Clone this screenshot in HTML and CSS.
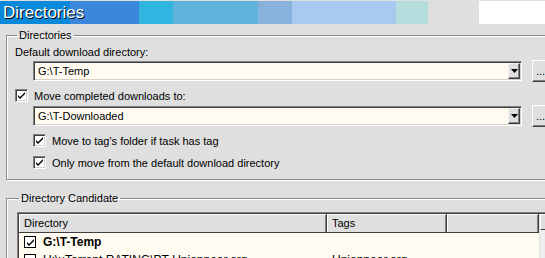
FILE: index.html
```html
<!DOCTYPE html>
<html lang="en">
<head>
    <meta charset="UTF-8">
    <title>Directories</title>
    <link rel="stylesheet" href="styles.css">
</head>
<body>
    <div class="caption">
        <div class="caption-band">Directories</div>
        <div class="caption-gap"></div>
        <div class="caption-white"></div>
    </div>

    <fieldset class="group">
        <legend>Directories</legend>
        <div class="label-row">Default download directory:</div>
        <div class="combo-row">
            <div class="combo">
                <span class="combo-text">G:\T-Temp</span>
                <span class="combo-btn"><svg width="7" height="4" viewBox="0 0 7 4"><path d="M0 0h7L3.5 4z" fill="#000"/></svg></span>
            </div>
            <button class="browse">...</button>
        </div>
        <label class="check-row first">
            <span class="check"><svg width="9" height="9" viewBox="0 0 9 9"><path d="M1 4l2 2 5-5v2l-5 5-2-2z" fill="#000"/></svg></span>
            Move completed downloads to:
        </label>
        <div class="combo-row second">
            <div class="combo">
                <span class="combo-text">G:\T-Downloaded</span>
                <span class="combo-btn"><svg width="7" height="4" viewBox="0 0 7 4"><path d="M0 0h7L3.5 4z" fill="#000"/></svg></span>
            </div>
            <button class="browse">...</button>
        </div>
        <label class="check-row sub">
            <span class="check"><svg width="9" height="9" viewBox="0 0 9 9"><path d="M1 4l2 2 5-5v2l-5 5-2-2z" fill="#000"/></svg></span>
            Move to tag's folder if task has tag
        </label>
        <label class="check-row sub last">
            <span class="check"><svg width="9" height="9" viewBox="0 0 9 9"><path d="M1 4l2 2 5-5v2l-5 5-2-2z" fill="#000"/></svg></span>
            Only move from the default download directory
        </label>
    </fieldset>

    <fieldset class="group candidates">
        <legend>Directory Candidate</legend>
        <div class="listview">
            <div class="list-body">
                <div class="list-head">
                    <div class="col col-dir">Directory</div>
                    <div class="col col-tags">Tags</div>
                    <div class="col col-rest"></div>
                </div>
                <div class="list-row">
                    <div class="col-dir cell">
                        <span class="check small"><svg width="9" height="9" viewBox="0 0 9 9"><path d="M1 4l2 2 5-5v2l-5 5-2-2z" fill="#000"/></svg></span>
                        <b>G:\T-Temp</b>
                    </div>
                    <div class="col-tags cell"></div>
                </div>
                <div class="list-row">
                    <div class="col-dir cell">
                        <span class="check small"></span>
                        H:\uTorrent RATING\PT-Unionpeer.org
                    </div>
                    <div class="col-tags cell">Unionpeer.org</div>
                </div>
            </div>
            <div class="list-scroll">
                <span class="scroll-up"><svg width="7" height="4" viewBox="0 0 7 4"><path d="M0 4h7L3.5 0z" fill="#000"/></svg></span>
            </div>
        </div>
    </fieldset>
</body>
</html>
```

FILE: styles.css
```css
body {
    margin: 0;
    width: 545px;
    height: 258px;
    overflow: hidden;
    background-color: #dfdfdf;
    font-family: "Liberation Sans", Arial, sans-serif;
    font-size: 11px;
    color: #000;
}
.caption {
    display: flex;
    height: 23px;
    margin-top: 1px;
}
.caption-band {
    width: 425px;
    padding-left: 3px;
    line-height: 23px;
    font-size: 17px;
    color: #fff;
    text-shadow: 1px 1px 0 #000;
    background: linear-gradient(to right,
        #0a88da 0 70px, #3a88dc 70px 139px, #30b4e0 139px 173px,
        #60b4dc 173px 258px, #88b2dc 258px 292px, #a8caf0 292px 396px,
        #b4dede 396px);
}
.caption-gap {
    width: 51px;
}
.caption-white {
    flex: 1;
    background-color: #fff;
}
.group {
    margin: 5px 0 0 6px;
    width: 560px;
    padding: 0 0 10px 8px;
    border: 1px solid #8a8a8a;
    box-shadow: inset 1px 1px 0 #fff, 1px 1px 0 #fff;
}
.group legend {
    padding: 0 2px;
    margin-left: 2px;
    line-height: 13px;
}
.label-row {
    margin-top: 3px;
    line-height: 14px;
}
.combo-row {
    display: flex;
    align-items: center;
    margin-top: 1px;
    padding-left: 18px;
}
.combo-row.second {
    margin-top: 3px;
}
.combo {
    display: flex;
    align-items: center;
    width: 485px;
    height: 16px;
    background-color: #fffbf0;
    border: 1px solid;
    border-color: #808080 #fff #fff #808080;
    box-shadow: inset 1px 1px 0 #404040, inset -1px -1px 0 #d4d0c8;
    padding: 1px;
}
.combo-text {
    flex: 1;
    padding-left: 3px;
}
.combo-btn {
    display: flex;
    align-items: center;
    justify-content: center;
    width: 12px;
    height: 16px;
    box-sizing: border-box;
    background-color: #dfdfdf;
    border: 1px solid;
    border-color: #f0f0f0 #404040 #404040 #f0f0f0;
    box-shadow: inset -1px -1px 0 #808080;
}
.browse {
    margin-left: 10px;
    width: 24px;
    height: 22px;
    padding: 0 0 0 3px;
    text-align: left;
    font: inherit;
    background-color: #dfdfdf;
    border: 1px solid;
    border-color: #fff #404040 #404040 #fff;
    box-shadow: inset -1px -1px 0 #808080;
}
.check-row {
    display: flex;
    align-items: center;
    gap: 6px;
    height: 13px;
}
.check-row.first {
    margin-top: 7px;
}
.check-row.sub {
    margin-top: 7px;
    padding-left: 18px;
}
.check-row.last {
    margin-top: 9px;
}
.check {
    display: flex;
    align-items: center;
    justify-content: center;
    width: 13px;
    height: 13px;
    box-sizing: border-box;
    background-color: #fff;
    border: 1px solid;
    border-color: #808080 #fff #fff #808080;
    box-shadow: inset 1px 1px 0 #404040, inset -1px -1px 0 #d4d0c8;
}
.check.small {
    border: 1px solid #000;
    box-shadow: none;
    width: 12px;
    height: 12px;
}
.candidates {
    margin-top: 12px;
    padding: 7px 0 0 10px;
}
.listview {
    display: flex;
    width: 540px;
    height: 60px;
    background-color: #fffbf0;
    border: 1px solid;
    border-color: #808080 #fff #fff #808080;
    box-shadow: inset 1px 1px 0 #404040;
    padding: 1px 0 0 1px;
}
.list-body {
    width: 520px;
}
.list-head {
    display: flex;
    height: 18px;
    background-color: #dfdfdf;
    border-bottom: 1px solid #404040;
}
.col {
    box-sizing: border-box;
    line-height: 18px;
    padding-left: 5px;
    border-right: 1px solid #404040;
    box-shadow: inset 1px 1px 0 #fff, inset -1px 0 0 #808080;
}
.col-dir {
    width: 308px;
}
.col-tags {
    width: 120px;
}
.col-rest {
    flex: 1;
}
.list-row {
    display: flex;
    height: 18px;
    align-items: center;
}
.cell {
    display: flex;
    align-items: center;
    gap: 7px;
    padding-left: 5px;
    box-sizing: border-box;
    font-size: 12px;
}
.list-scroll {
    width: 16px;
    background-color: #eeeeee;
    border-left: 1px solid #dfdfdf;
}
.scroll-up {
    display: flex;
    align-items: center;
    justify-content: center;
    height: 16px;
    box-sizing: border-box;
    background-color: #dfdfdf;
    border: 1px solid;
    border-color: #fff #404040 #404040 #fff;
}
```
